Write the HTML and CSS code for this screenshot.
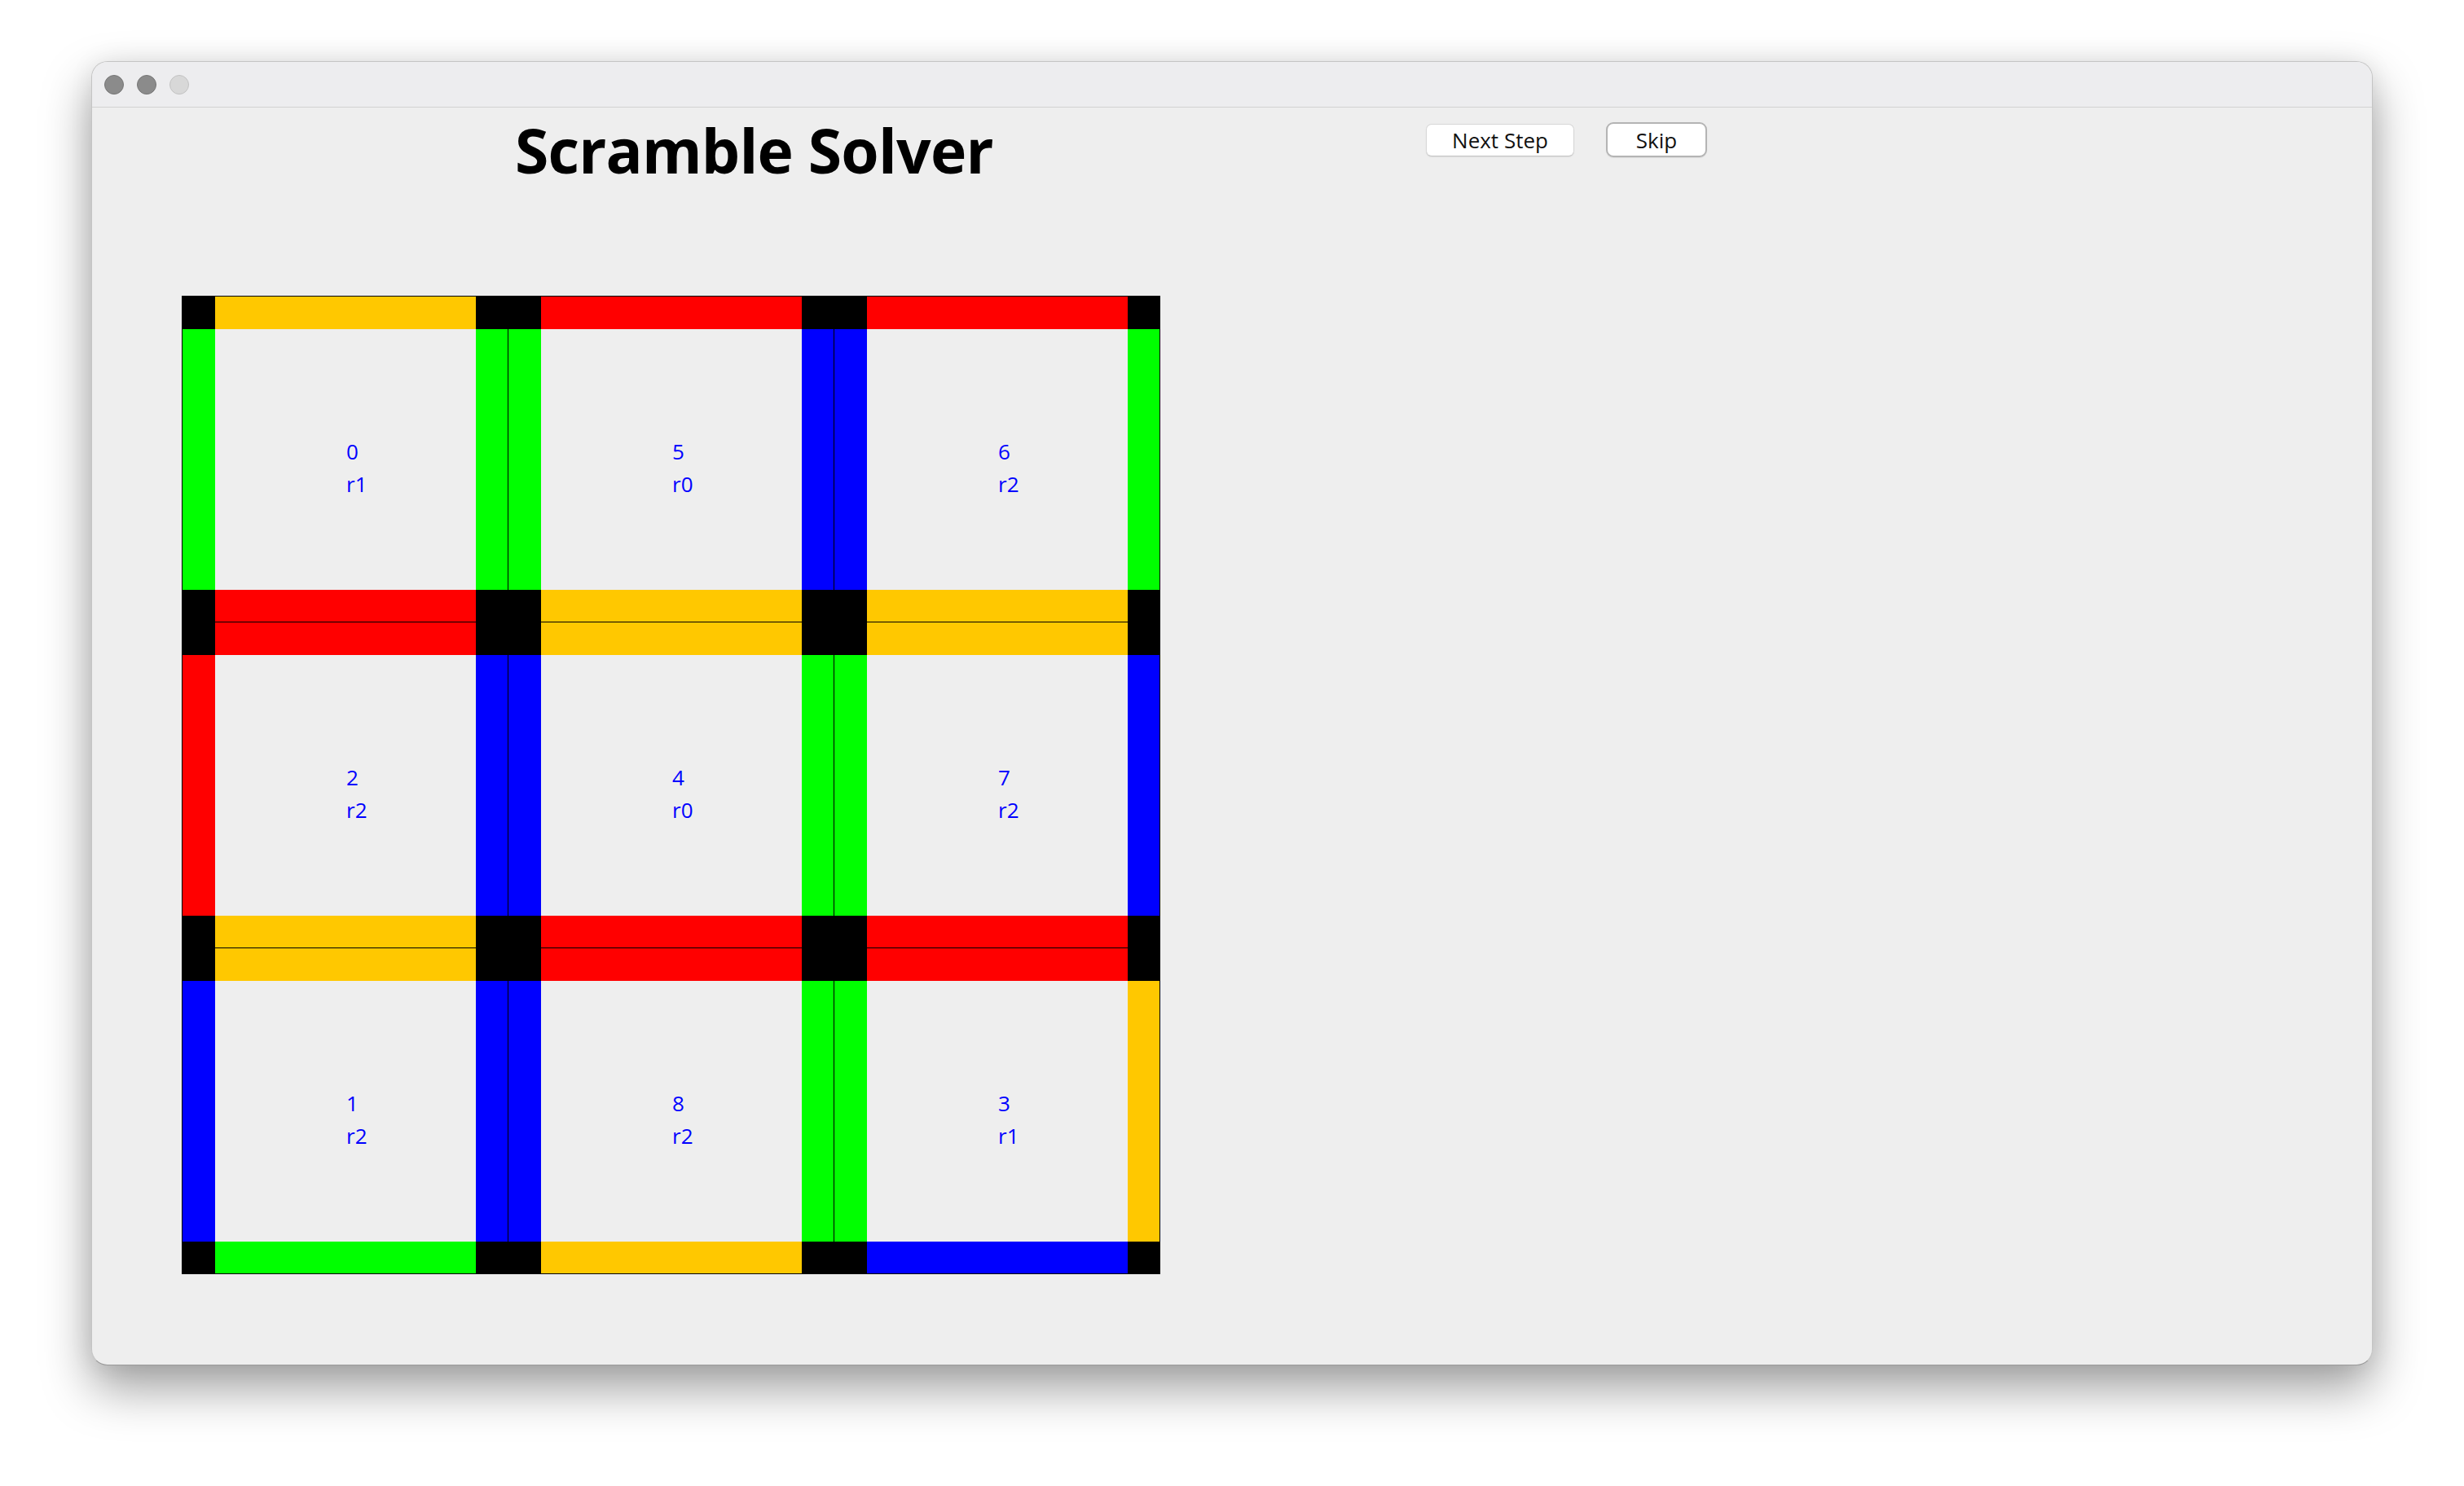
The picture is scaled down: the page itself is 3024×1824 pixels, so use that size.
FILE: index.html
```html
<!DOCTYPE html>
<html lang="en">
<head>
<meta charset="utf-8">
<title>Scramble Solver</title>
<link rel="stylesheet" href="styles.css">
</head>
<body>
<div class="window">
  <div class="titlebar">
    <span class="light dark"></span>
    <span class="light dark"></span>
    <span class="light pale"></span>
  </div>
  <div class="content">
    <div class="toolbar">
      <h1 class="title">Scramble Solver</h1>
      <div class="buttons">
        <button class="btn">Next Step</button>
        <button class="btn btn-default">Skip</button>
      </div>
    </div>
    <div class="board">
      <div class="cell">
        <div class="top y"></div><div class="left g"></div><div class="center"><span>0</span><span>r1</span></div><div class="right g"></div><div class="bottom r"></div>
      </div>
      <div class="cell">
        <div class="top r"></div><div class="left g"></div><div class="center"><span>5</span><span>r0</span></div><div class="right b"></div><div class="bottom y"></div>
      </div>
      <div class="cell">
        <div class="top r"></div><div class="left b"></div><div class="center"><span>6</span><span>r2</span></div><div class="right g"></div><div class="bottom y"></div>
      </div>
      <div class="cell">
        <div class="top r"></div><div class="left r"></div><div class="center"><span>2</span><span>r2</span></div><div class="right b"></div><div class="bottom y"></div>
      </div>
      <div class="cell">
        <div class="top y"></div><div class="left b"></div><div class="center"><span>4</span><span>r0</span></div><div class="right g"></div><div class="bottom r"></div>
      </div>
      <div class="cell">
        <div class="top y"></div><div class="left g"></div><div class="center"><span>7</span><span>r2</span></div><div class="right b"></div><div class="bottom r"></div>
      </div>
      <div class="cell">
        <div class="top y"></div><div class="left b"></div><div class="center"><span>1</span><span>r2</span></div><div class="right b"></div><div class="bottom g"></div>
      </div>
      <div class="cell">
        <div class="top r"></div><div class="left b"></div><div class="center"><span>8</span><span>r2</span></div><div class="right g"></div><div class="bottom y"></div>
      </div>
      <div class="cell">
        <div class="top r"></div><div class="left g"></div><div class="center"><span>3</span><span>r1</span></div><div class="right y"></div><div class="bottom b"></div>
      </div>
    </div>
  </div>
</div>
</body>
</html>
```
FILE: styles.css
```css
html, body {
  margin: 0;
  padding: 0;
}

body {
  width: 3024px;
  height: 1824px;
  background: #ffffff;
  overflow: hidden;
  font-family: "Open Sans", "DejaVu Sans", sans-serif;
}

.window {
  box-sizing: border-box;
  margin: 75px 0 0 112px;
  width: 2800px;
  height: 1601px;
  background: #eeeeee;
  border: 1px solid #c4c4c4;
  border-bottom-color: #9a9a9a;
  border-radius: 20px;
  overflow: hidden;
  box-shadow: 0 28px 60px rgba(0, 0, 0, 0.38), 0 0 30px rgba(0, 0, 0, 0.07);
}

.titlebar {
  height: 55px;
  background: #ededef;
  border-bottom: 1px solid #d2d2d2;
  display: flex;
  align-items: center;
  gap: 16px;
  padding-left: 15px;
}

.light {
  box-sizing: border-box;
  width: 24px;
  height: 24px;
  border-radius: 50%;
}

.light.dark {
  background: #8b8b8b;
  border: 1px solid #767676;
}

.light.pale {
  background: #d8d8d8;
  border: 1px solid #c2c2c2;
}

.toolbar {
  display: flex;
  align-items: flex-start;
  padding-left: 519px;
}

.title {
  flex: 0 0 1118px;
  margin: 14px 0 0 0;
  font-family: "Open Sans", "DejaVu Sans", sans-serif;
  font-weight: 700;
  font-size: 75px;
  line-height: 77px;
  letter-spacing: -0.8px;
  color: #000000;
  white-space: nowrap;
}

.buttons {
  display: flex;
  gap: 39px;
  margin-top: 20px;
}

.btn {
  box-sizing: border-box;
  height: 40px;
  width: 182px;
  padding: 0;
  background: #ffffff;
  border: 1px solid #d6d6d6;
  border-bottom-color: #c6c6c6;
  border-radius: 7px;
  box-shadow: 0 1px 1px rgba(0, 0, 0, 0.08);
  font-family: "Open Sans", "DejaVu Sans", sans-serif;
  font-size: 26px;
  line-height: 36px;
  color: #111111;
}

.btn-default {
  width: 124px;
  height: 43px;
  margin-top: -2px;
  border: 2px solid #b4b4b4;
  border-radius: 9px;
}

.board {
  margin: 140px 0 0 110px;
  display: grid;
  grid-template-columns: repeat(3, 400px);
  grid-template-rows: repeat(3, 400px);
  width: 1201px;
  box-sizing: border-box;
  border-right: 1px solid #000000;
  border-bottom: 1px solid #000000;
}

.cell {
  display: grid;
  grid-template-columns: 40px 320px 39px;
  grid-template-rows: 40px 320px 39px;
  background: #000000;
  border-left: 1px solid #000000;
  border-top: 1px solid #000000;
}

.top { grid-area: 1 / 2; }
.left { grid-area: 2 / 1; }
.center { grid-area: 2 / 2; }
.right { grid-area: 2 / 3; }
.bottom { grid-area: 3 / 2; }

.y { background: #ffc800; }
.g { background: #00ff00; }
.r { background: #ff0000; }
.b { background: #0000ff; }

.center {
  background: #eeeeee;
  display: flex;
  flex-direction: column;
  box-sizing: border-box;
  padding: 130px 0 0 161px;
  font-family: "Open Sans", "DejaVu Sans", sans-serif;
  font-size: 26px;
  line-height: 40px;
  color: #0000ff;
}
```
